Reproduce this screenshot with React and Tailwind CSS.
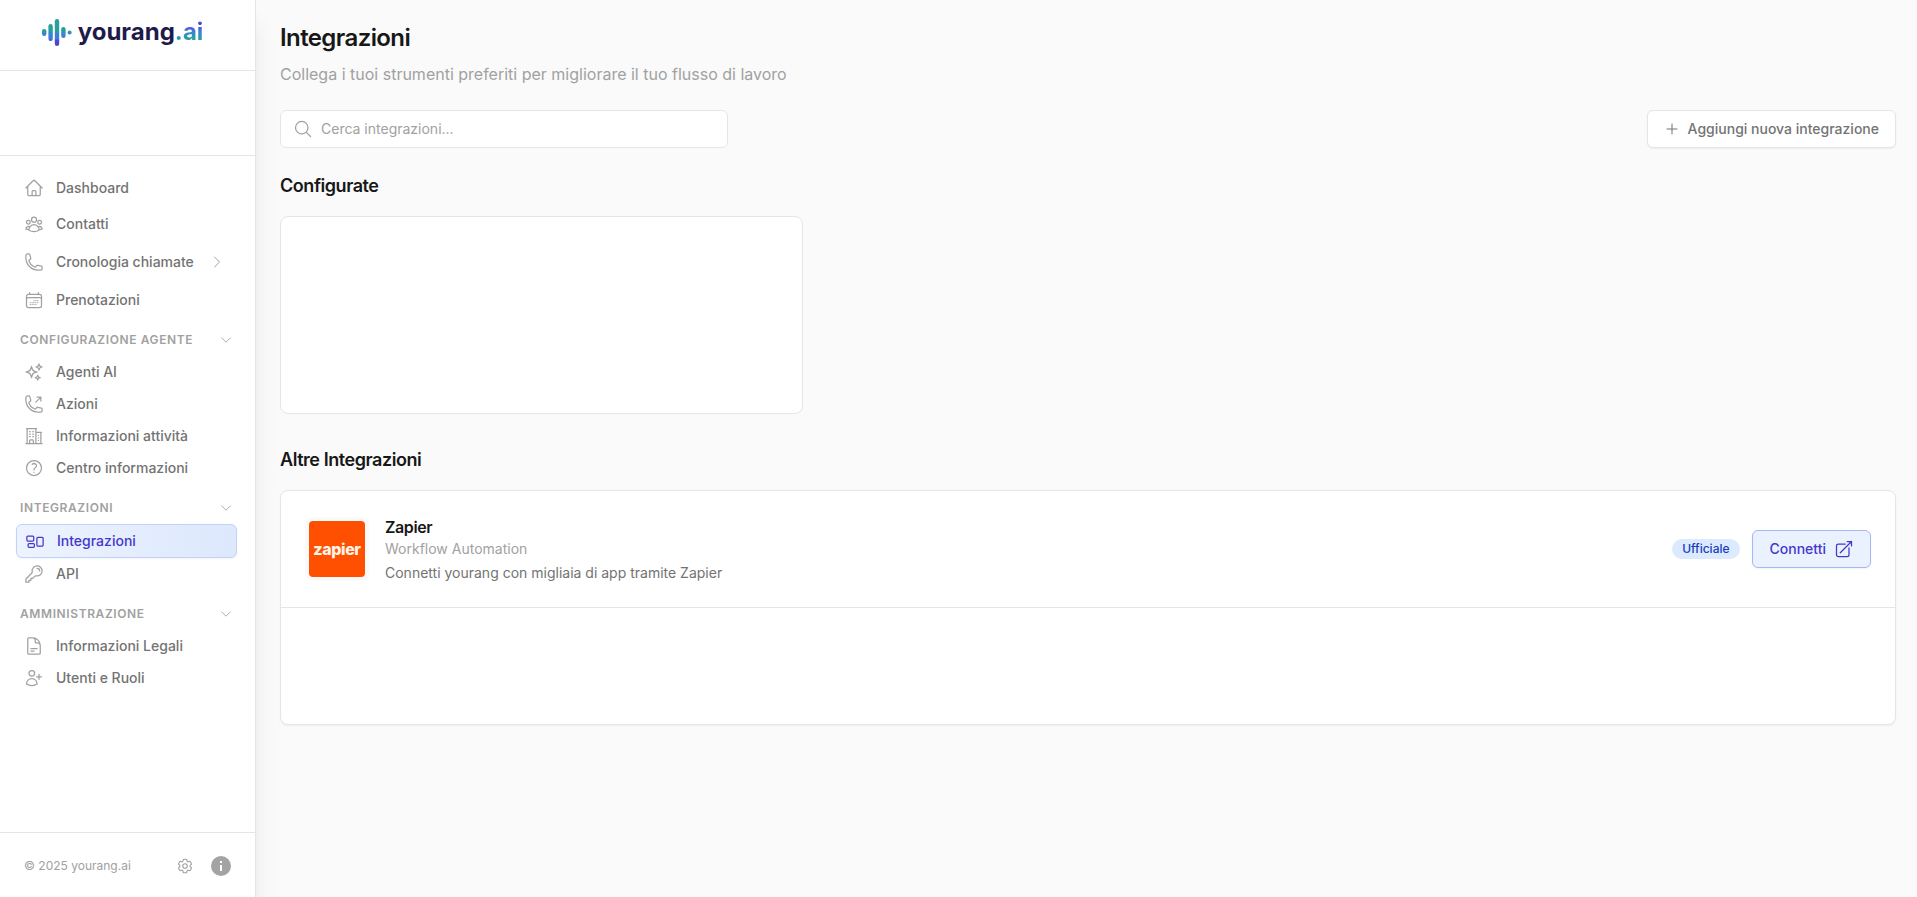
import {
  HiOutlineHome, HiOutlineUserGroup, HiOutlinePhone, HiOutlineCalendarDays, HiOutlineSparkles,
  HiOutlinePhoneArrowUpRight, HiOutlineBuildingOffice2, HiOutlineQuestionMarkCircle,
  HiOutlineRectangleGroup, HiOutlineKey, HiOutlineDocumentText, HiOutlineUserPlus,
  HiOutlineCog6Tooth, HiOutlineChevronRight, HiOutlineChevronDown, HiOutlineMagnifyingGlass,
  HiOutlinePlus, HiOutlineArrowTopRightOnSquare,
} from "react-icons/hi2";

const mainItems = [
  { label: "Dashboard", icon: HiOutlineHome, height: "h-9" },
  { label: "Contatti", icon: HiOutlineUserGroup, height: "h-9" },
  { label: "Cronologia chiamate", icon: HiOutlinePhone, height: "h-10", expandable: true },
  { label: "Prenotazioni", icon: HiOutlineCalendarDays, height: "h-9" },
];

const sections = [
  {
    title: "CONFIGURAZIONE AGENTE",
    items: [
      { label: "Agenti AI", icon: HiOutlineSparkles },
      { label: "Azioni", icon: HiOutlinePhoneArrowUpRight },
      { label: "Informazioni attività", icon: HiOutlineBuildingOffice2 },
      { label: "Centro informazioni", icon: HiOutlineQuestionMarkCircle },
    ],
  },
  {
    title: "INTEGRAZIONI",
    items: [
      { label: "Integrazioni", icon: HiOutlineRectangleGroup, active: true },
      { label: "API", icon: HiOutlineKey },
    ],
  },
  {
    title: "AMMINISTRAZIONE",
    items: [
      { label: "Informazioni Legali", icon: HiOutlineDocumentText },
      { label: "Utenti e Ruoli", icon: HiOutlineUserPlus },
    ],
  },
];

function Logo() {
  return (
    <a href="#" className="flex items-center gap-1.5">
      <svg width="30" height="28" viewBox="0 0 30 28" aria-hidden="true">
        <defs>
          <linearGradient id="bars" x1="0" y1="0" x2="0" y2="28" gradientUnits="userSpaceOnUse">
            <stop offset="0.48" stopColor="#26a09c" />
            <stop offset="0.54" stopColor="#3b82d4" />
            <stop offset="0.74" stopColor="#3b82d4" />
            <stop offset="0.8" stopColor="#4f46d0" />
          </linearGradient>
        </defs>
        <g fill="url(#bars)">
          <rect x="0" y="11" width="4.4" height="7" rx="2.2" />
          <rect x="6.4" y="6" width="4.4" height="17" rx="2.2" />
          <rect x="12.8" y="1" width="4.4" height="27" rx="2.2" />
          <rect x="19.2" y="9" width="4.4" height="11" rx="2.2" />
          <circle cx="27.6" cy="14.5" r="2" />
        </g>
      </svg>
      <span className="text-2xl font-bold text-[#1e1b4b]">
        yourang
        <span className="bg-linear-to-b from-[#4f46d0] from-30% via-[#3b82d4] via-50% to-[#26a09c] to-75% bg-clip-text text-transparent">.ai</span>
      </span>
    </a>
  );
}

function NavItem({ label, icon: Icon, height = "h-8", active, expandable }) {
  if (active) {
    return (
      <a href="#" aria-current="page" className="flex h-[34px] items-center gap-3 rounded-md border border-[#bfd3fb] bg-linear-to-r from-[#edf3ff] to-[#dde8fd] px-2 text-sm font-medium text-[#4338ca] shadow-xs">
        <Icon className="size-5" />
        {label}
      </a>
    );
  }
  return (
    <a href="#" className={`flex items-center gap-3 px-2 text-sm font-medium text-neutral-500 ${height}`}>
      <Icon className="size-5 text-neutral-400" />
      <span>{label}</span>
      {expandable && <HiOutlineChevronRight className="mr-3 ml-auto size-4 text-neutral-400" />}
    </a>
  );
}

function Sidebar() {
  return (
    <aside className="z-10 flex w-64 shrink-0 flex-col border-r border-neutral-200 bg-white shadow-xl">
      <div className="flex h-[71px] items-center justify-center border-b border-neutral-200 pr-2.5 pb-1.5">
        <Logo />
      </div>
      <div className="h-[85px] border-b border-neutral-200" />
      <nav className="flex flex-1 flex-col gap-4 pt-3.5 pr-[18px] pl-4">
        <div className="-mr-2 -mb-0.5">
          {mainItems.map((item) => (
            <NavItem key={item.label} {...item} />
          ))}
        </div>
        {sections.map((section) => (
          <div key={section.title}>
            <button type="button" className="mb-2 flex h-4 w-full items-center justify-between pr-1 pl-1 text-xs font-semibold tracking-wider text-neutral-400">
              {section.title}
              <HiOutlineChevronDown className="size-3.5" />
            </button>
            {section.items.map((item) => (
              <NavItem key={item.label} {...item} />
            ))}
          </div>
        ))}
      </nav>
      <div className="flex h-[65px] items-center border-t border-neutral-200 px-6 pt-0.5">
        <span className="flex-1 text-xs text-neutral-400">© 2025 yourang.ai</span>
        <button type="button" aria-label="Impostazioni" className="text-neutral-400">
          <HiOutlineCog6Tooth className="size-[18px]" />
        </button>
        <button type="button" aria-label="Informazioni" className="ml-[17px]">
          <svg viewBox="0 0 20 20" className="size-5" aria-hidden="true">
            <circle cx="10" cy="10" r="10" fill="#a3a3a3" />
            <rect x="9" y="5" width="2" height="2" fill="#fff" />
            <rect x="9" y="9" width="2" height="6" fill="#fff" />
          </svg>
        </button>
      </div>
    </aside>
  );
}

function SearchBar() {
  return (
    <div className="flex items-center justify-between">
      <label className="flex h-[38px] w-full max-w-md items-center gap-2 rounded-md border border-neutral-200 bg-white px-3">
        <HiOutlineMagnifyingGlass className="size-5 text-neutral-400" />
        <input type="search" aria-label="Cerca integrazioni" placeholder="Cerca integrazioni..." className="flex-1 text-sm outline-none placeholder:text-neutral-400" />
      </label>
      <button type="button" className="flex h-[38px] items-center gap-2 rounded-md border border-neutral-200 bg-white px-4 text-sm font-medium text-neutral-500 shadow-xs">
        <HiOutlinePlus className="size-4 text-neutral-500" />
        Aggiungi nuova integrazione
      </button>
    </div>
  );
}

export default function App() {
  return (
    <div className="flex min-h-screen bg-neutral-50 font-['Inter','Liberation_Sans',sans-serif]">
      <Sidebar />
      <main className="flex-1 pt-5 pr-[21px] pl-6">
        <h1 className="text-2xl/9 font-semibold tracking-tight text-neutral-900">Integrazioni</h1>
        <p className="mt-1.5 text-base text-neutral-400">Collega i tuoi strumenti preferiti per migliorare il tuo flusso di lavoro</p>
        <div className="mt-6">
          <SearchBar />
        </div>

        <h2 className="mt-6 text-lg font-semibold tracking-tight text-neutral-900">Configurate</h2>
        <div className="mt-4 grid grid-cols-3 gap-6">
          <div className="h-[198px] rounded-lg border border-neutral-200 bg-white" />
        </div>

        <h2 className="mt-8 text-lg font-semibold tracking-tight text-neutral-900">Altre Integrazioni</h2>
        <div className="mt-4 divide-y divide-neutral-200 rounded-lg border border-neutral-200 bg-white shadow-xs">
          <div className="flex items-center gap-4 p-6">
            <div className="rounded-lg bg-neutral-50 p-1">
              <div className="flex size-14 items-center justify-center rounded-sm bg-[#ff4f00] text-base font-extrabold tracking-tight text-[#fff3e6]">zapier</div>
            </div>
            <div className="flex-1">
              <h3 className="text-base font-semibold tracking-tight text-neutral-900">Zapier</h3>
              <p className="text-sm text-neutral-400">Workflow Automation</p>
              <p className="mt-1 text-sm text-neutral-500">Connetti yourang con migliaia di app tramite Zapier</p>
            </div>
            <div className="flex items-center gap-3">
              <span className="rounded-full bg-blue-100 px-2.5 py-0.5 text-xs font-medium text-blue-800">Ufficiale</span>
              <button type="button" className="flex h-[38px] items-center gap-2 rounded-md border border-[#a5b8f5] bg-[#ebf2ff] pr-4 pl-[17px] text-sm font-medium text-[#4338ca] shadow-xs">
                Connetti
                <HiOutlineArrowTopRightOnSquare className="size-5" />
              </button>
            </div>
          </div>
          <div className="h-[116px]" />
        </div>
      </main>
    </div>
  );
}
